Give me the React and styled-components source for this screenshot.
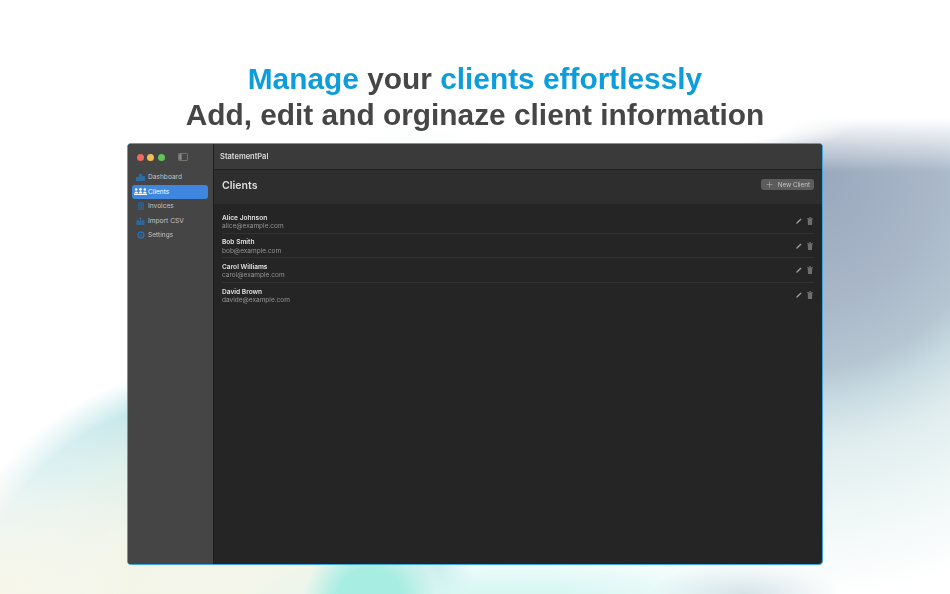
import React from "react";
import styled, { createGlobalStyle } from "styled-components";
import { Plus } from "lucide-react";

const CLIENTS = [
  { name: "Alice Johnson", email: "alice@example.com" },
  { name: "Bob Smith", email: "bob@example.com" },
  { name: "Carol Williams", email: "carol@example.com" },
  { name: "David Brown", email: "davide@example.com" },
];

const NAV = [
  { label: "Dashboard", icon: "chart" },
  { label: "Clients", icon: "people", active: true },
  { label: "Invoices", icon: "doc" },
  { label: "Import CSV", icon: "tray" },
  { label: "Settings", icon: "gear" },
];

function NavIcon({ type, color }) {
  if (type === "chart") {
    return (
      <svg width="9" height="7" viewBox="0 0 9 7" fill={color}>
        <rect x="0" y="3" width="3" height="4" rx="0.5" />
        <rect x="3" y="0" width="3" height="7" rx="0.5" />
        <rect x="6" y="2" width="3" height="5" rx="0.5" />
      </svg>
    );
  }
  if (type === "people") {
    return (
      <svg width="13" height="7" viewBox="0 0 13 7" fill={color}>
        <circle cx="2.2" cy="1.5" r="1.2" />
        <circle cx="6.5" cy="1.4" r="1.3" />
        <circle cx="10.8" cy="1.5" r="1.2" />
        <path d="M0.4 5.4c0-1.2 0.8-2 1.8-2s1.8 0.8 1.8 2zM4.7 5.4c0-1.2 0.8-2.1 1.8-2.1s1.8 0.9 1.8 2.1zM9 5.4c0-1.2 0.8-2 1.8-2s1.8 0.8 1.8 2z" />
        <rect x="0" y="6" width="13" height="1" />
      </svg>
    );
  }
  if (type === "doc") {
    return (
      <svg width="6" height="8" viewBox="0 0 6 8" fill="none" stroke={color} strokeWidth="0.7">
        <rect x="0.4" y="0.4" width="5.2" height="7.2" rx="0.8" fill={color} fillOpacity="0.35" />
        <path d="M1.6 2.6h2.8M1.6 4h2.8M1.6 5.4h2.8" strokeWidth="0.5" />
      </svg>
    );
  }
  if (type === "tray") {
    return (
      <svg width="9" height="8" viewBox="0 0 9 8" fill={color}>
        <path d="M0.3 4.2 1.2 3h1.6v1h3.4V3h1.6l0.9 1.2v3a0.8 0.8 0 0 1-0.8 0.8H1.1a0.8 0.8 0 0 1-0.8-0.8z" fillOpacity="0.8" />
        <path d="M4.5 0 6 2H5.1v2.4H3.9V2H3z" />
      </svg>
    );
  }
  return (
    <svg width="8" height="8" viewBox="0 0 8 8" fill="none" stroke={color}>
      <circle cx="4" cy="4" r="2.9" strokeWidth="1.5" />
      <circle cx="4" cy="4" r="0.9" fill={color} strokeWidth="0" />
    </svg>
  );
}

export default function App() {
  return (
    <>
      <GlobalStyle />
      <Page>
        <Heading>
          <Line>
            <Accent>Manage</Accent> your <Accent>clients effortlessly</Accent>
          </Line>
          <Line>Add, edit and orginaze client information</Line>
        </Heading>
        <Window>
          <Sidebar>
            <Traffic>
              <Light $color="#ec6a5e" />
              <Light $color="#f4bf4f" />
              <Light $color="#61c554" />
              <ToggleIcon width="10" height="8" viewBox="0 0 10 8" fill="none" stroke="#8f8f8f" strokeWidth="0.7">
                <rect x="0.4" y="0.4" width="9.2" height="7.2" rx="1.3" />
                <rect x="1.2" y="1.2" width="2.4" height="5.6" fill="#8f8f8f" stroke="none" />
              </ToggleIcon>
            </Traffic>
            <Nav>
              {NAV.map((item) => (
                <NavItem key={item.label} $active={item.active}>
                  <IconSlot>
                    <NavIcon type={item.icon} color={item.active ? "#ffffff" : "#2a6dab"} />
                  </IconSlot>
                  {item.label}
                </NavItem>
              ))}
            </Nav>
          </Sidebar>
          <Main>
            <TitleBar>StatementPal</TitleBar>
            <Header>
              <Title>Clients</Title>
              <NewClient>
                <Plus size={9} strokeWidth={1.3} color="#c4c4c4" />
                New Client
              </NewClient>
            </Header>
            <List>
              {CLIENTS.map((client) => (
                <Row key={client.name}>
                  <div>
                    <Name>{client.name}</Name>
                    <Email>{client.email}</Email>
                  </div>
                  <Actions>
                    <svg width="6" height="6" viewBox="0 0 6 6">
                      <path d="M0.2 5.8 0.5 4.6 4.6 0.5 5.5 1.4 1.4 5.5z" fill="#a0a0a0" />
                    </svg>
                    <svg width="6" height="8" viewBox="0 0 6 8">
                      <path d="M0 1h6v0.7H0zM2 0h2v0.8H2zM0.7 2.1h4.6l-0.3 5.9H1z" fill="#6e6e6e" />
                    </svg>
                  </Actions>
                </Row>
              ))}
            </List>
          </Main>
        </Window>
      </Page>
    </>
  );
}

const GlobalStyle = createGlobalStyle`
  html, body {
    margin: 0;
    padding: 0;
  }
  body {
    font-family: "Liberation Sans", Arial, sans-serif;
  }
`;

const Page = styled.div`
  width: 950px;
  height: 594px;
  overflow: hidden;
  box-sizing: border-box;
  padding-top: 60px;
  display: flex;
  flex-direction: column;
  align-items: center;
  background:
    radial-gradient(ellipse 240px 45px at 620px 120px, #ffffff 72%, rgba(255, 255, 255, 0) 100%),
    linear-gradient(to bottom, #ffffff 118px, rgba(255, 255, 255, 0) 172px),
    radial-gradient(circle 430px at 800px 170px, #98a6bc 0, #a8b6c8 130px, #b5c6d2 200px, #c8dbe2 232px, #dfecee 275px, #eef6f6 340px, rgba(255, 255, 255, 0) 100%),
    radial-gradient(ellipse 66px 62px at 370px 600px, #a8ede2 50%, rgba(168, 237, 226, 0) 100%),
    radial-gradient(ellipse 95px 32px at 745px 594px, #d5e3e8 0, rgba(213, 227, 232, 0) 100%),
    radial-gradient(ellipse 280px 55px at 520px 600px, #d8f7f3 20%, rgba(216, 247, 243, 0) 100%),
    radial-gradient(ellipse 170px 130px at 0px 594px, #f8f6e9 0, rgba(248, 246, 233, 0) 100%),
    linear-gradient(to right, rgba(255, 255, 255, 0.6), rgba(255, 255, 255, 0) 130px),
    radial-gradient(circle 272px at 210px 640px, #f5f6ea 0, #f2f5ea 130px, #dff0ea 195px, #c6e8ea 240px, rgba(255, 255, 255, 0) 100%),
    #ffffff;
`;

const Heading = styled.h1`
  margin: 0;
  font-size: 29.85px;
  font-weight: 700;
  line-height: 37px;
  text-align: center;
  color: #464646;
  filter: blur(0.25px);
`;

const Line = styled.div`
  &:last-child {
    margin-top: -1px;
    margin-bottom: 1px;
  }
`;

const Accent = styled.span`
  color: #0d9ddb;
`;

const Window = styled.div`
  margin-top: 9px;
  width: 696px;
  height: 422px;
  box-sizing: border-box;
  display: flex;
  border: 1px solid #3fa6e4;
  border-radius: 4px;
  overflow: hidden;
  background: #252525;
  filter: blur(0.3px);
`;

const Sidebar = styled.aside`
  width: 85px;
  flex-shrink: 0;
  background: #454545;
  border-right: 1px solid #1d1d1d;
`;

const Traffic = styled.div`
  height: 26px;
  display: flex;
  align-items: center;
  gap: 3.3px;
  padding-left: 9px;
`;

const Light = styled.span`
  width: 7px;
  height: 7px;
  border-radius: 50%;
  background: ${(p) => p.$color};
`;

const ToggleIcon = styled.svg`
  margin-left: 10px;
`;

const Nav = styled.nav`
  padding: 0 5px 0 4px;
  display: flex;
  flex-direction: column;
`;

const NavItem = styled.div`
  height: 14.5px;
  display: flex;
  align-items: center;
  border-radius: 3px;
  font-family: Inter, "Liberation Sans", sans-serif;
  font-size: 6.6px;
  color: ${(p) => (p.$active ? "#ffffff" : "#c4c4c4")};
  background: ${(p) => (p.$active ? "#3f86e0" : "transparent")};
`;

const IconSlot = styled.span`
  width: 16px;
  box-sizing: border-box;
  padding-left: 1px;
  display: flex;
  justify-content: center;
`;

const Main = styled.main`
  flex: 1;
  min-width: 0;
  display: flex;
  flex-direction: column;
`;

const TitleBar = styled.div`
  height: 26px;
  box-sizing: border-box;
  display: flex;
  align-items: center;
  padding-left: 6px;
  font-family: Inter, "Liberation Sans", sans-serif;
  font-size: 7.5px;
  font-weight: 600;
  color: #dcdcdc;
  background: #3a3a3a;
  border-bottom: 1px solid #1f1f1f;
`;

const Header = styled.div`
  height: 34px;
  box-sizing: border-box;
  display: flex;
  align-items: center;
  justify-content: space-between;
  padding: 0 8px 4px;
  background: #2e2e2e;
`;

const Title = styled.div`
  font-family: Inter, "Liberation Sans", sans-serif;
  font-size: 10.6px;
  font-weight: 600;
  color: #dcdcdc;
`;

const NewClient = styled.div`
  height: 11px;
  margin-bottom: 1px;
  padding: 0 4px;
  display: flex;
  align-items: center;
  gap: 3.5px;
  border-radius: 3px;
  font-family: Inter, "Liberation Sans", sans-serif;
  font-size: 6.3px;
  color: #c4c4c4;
  background: #5c5c5c;
`;

const List = styled.div`
  padding: 5px 8px 0;
`;

const Row = styled.div`
  height: 24.5px;
  box-sizing: border-box;
  padding-top: 3px;
  display: flex;
  align-items: center;
  justify-content: space-between;
  border-bottom: 1px solid #313131;
  &:last-child {
    border-bottom: 0;
  }
`;

const Name = styled.div`
  font-family: Inter, "Liberation Sans", sans-serif;
  font-size: 6.6px;
  line-height: 8.5px;
  font-weight: 600;
  color: #e0e0e0;
`;

const Email = styled.div`
  font-family: Inter, "Liberation Sans", sans-serif;
  font-size: 6.5px;
  line-height: 8.5px;
  color: #949494;
`;

const Actions = styled.div`
  display: flex;
  align-items: center;
  gap: 5px;
  padding-right: 1px;
  margin-bottom: 2px;
`;
